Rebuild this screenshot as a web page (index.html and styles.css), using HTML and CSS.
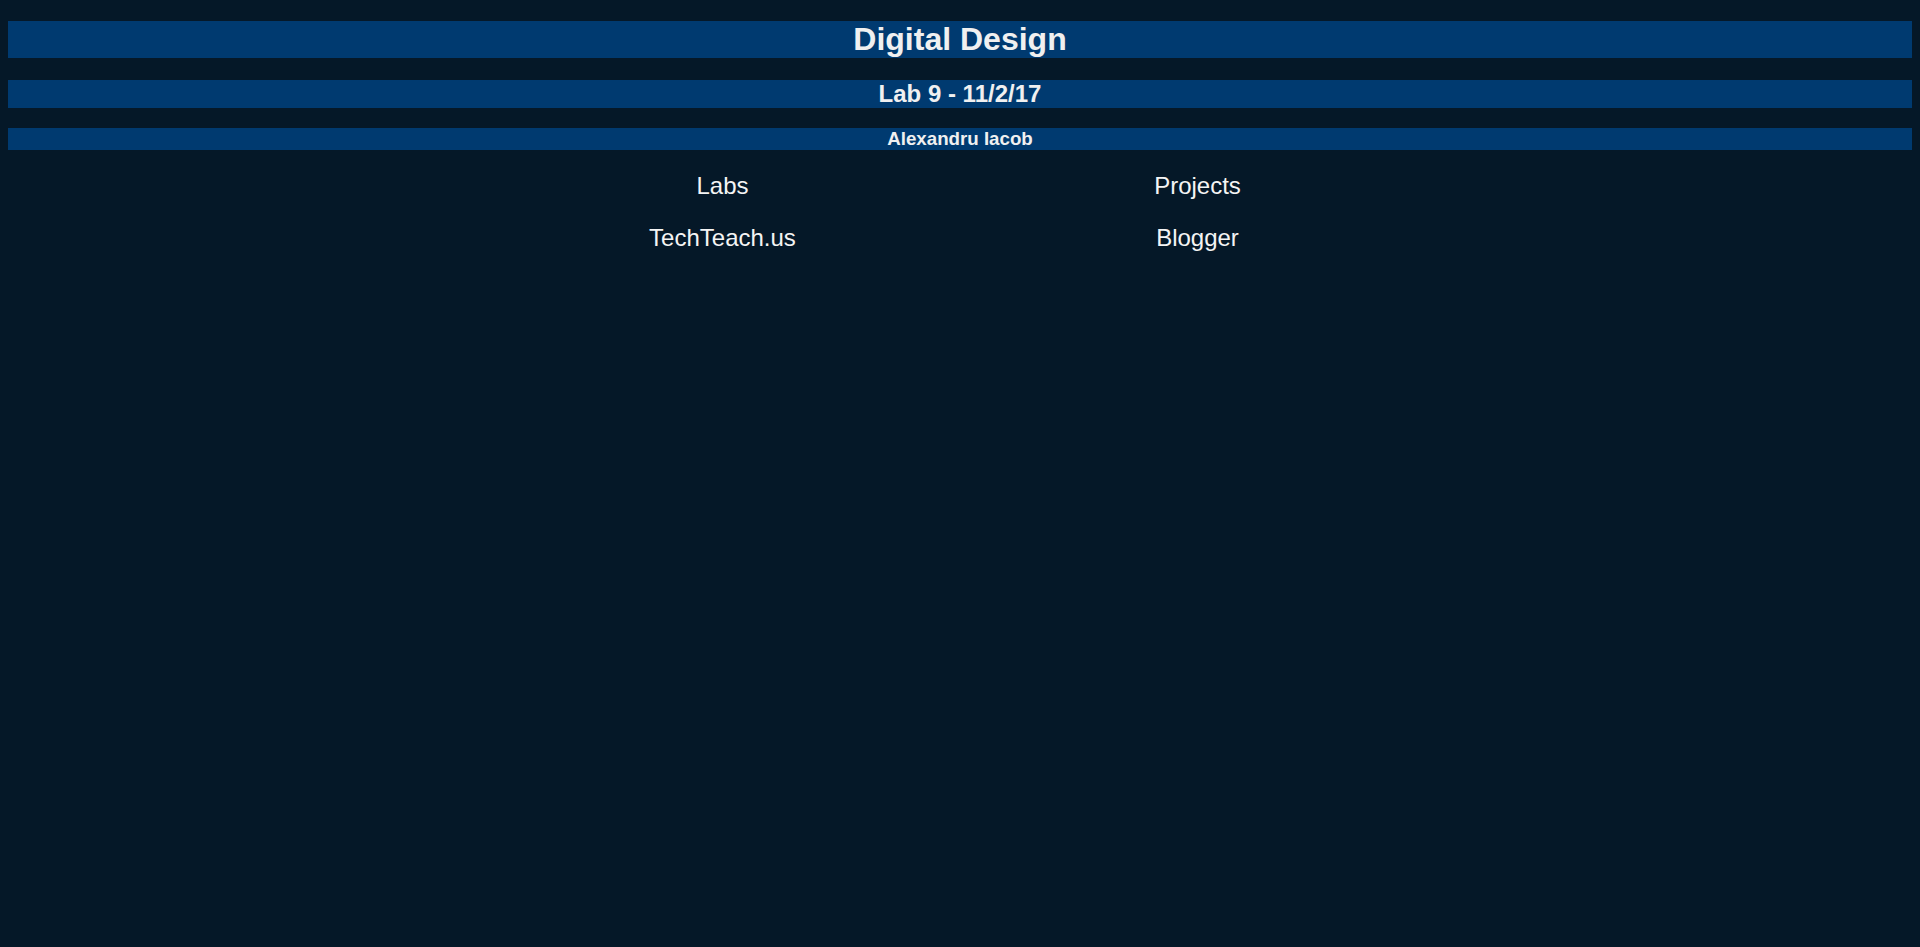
FILE: index.html
```html
<!DOCTYPE html>
<html>
<head>
<meta charset="utf-8">
<title>Digital Design - Lab 9</title>
<link rel="stylesheet" href="styles.css">
</head>
<body>
<h1 class="bar title">Digital Design</h1>
<h2 class="bar subtitle">Lab 9 - 11/2/17</h2>
<h3 class="bar author">Alexandru Iacob</h3>
<nav class="links">
  <a class="link" href="#">Labs</a>
  <a class="link" href="#">Projects</a>
  <a class="link" href="#">TechTeach.us</a>
  <a class="link" href="#">Blogger</a>
</nav>
</body>
</html>
```
FILE: styles.css
```css
html, body {
  background: #051828;
}
html {
  margin: 0;
  padding: 0;
}
body {
  margin: 0 8px;
  padding: 0;
  font-family: "Liberation Sans", Arial, sans-serif;
  color: #f0f0f0;
}
.bar {
  background: #003a70;
  color: #f0f0f0;
  text-align: center;
  font-weight: bold;
}
.title {
  font-size: 32px;
  line-height: 37px;
  margin: 21px 0 22px;
}
.subtitle {
  font-size: 24px;
  line-height: 28px;
  margin: 20px 0;
}
.author {
  font-size: 18.72px;
  line-height: 22px;
  margin: 18.72px 0;
}
.links {
  display: grid;
  grid-template-columns: 475px 475px;
  justify-content: center;
  row-gap: 24px;
  margin-top: 22px;
  margin-left: -8px;
  margin-right: -8px;
}
.link {
  color: #f4f4f4;
  text-decoration: none;
  text-align: center;
  font-size: 24px;
  line-height: 28px;
}
```
